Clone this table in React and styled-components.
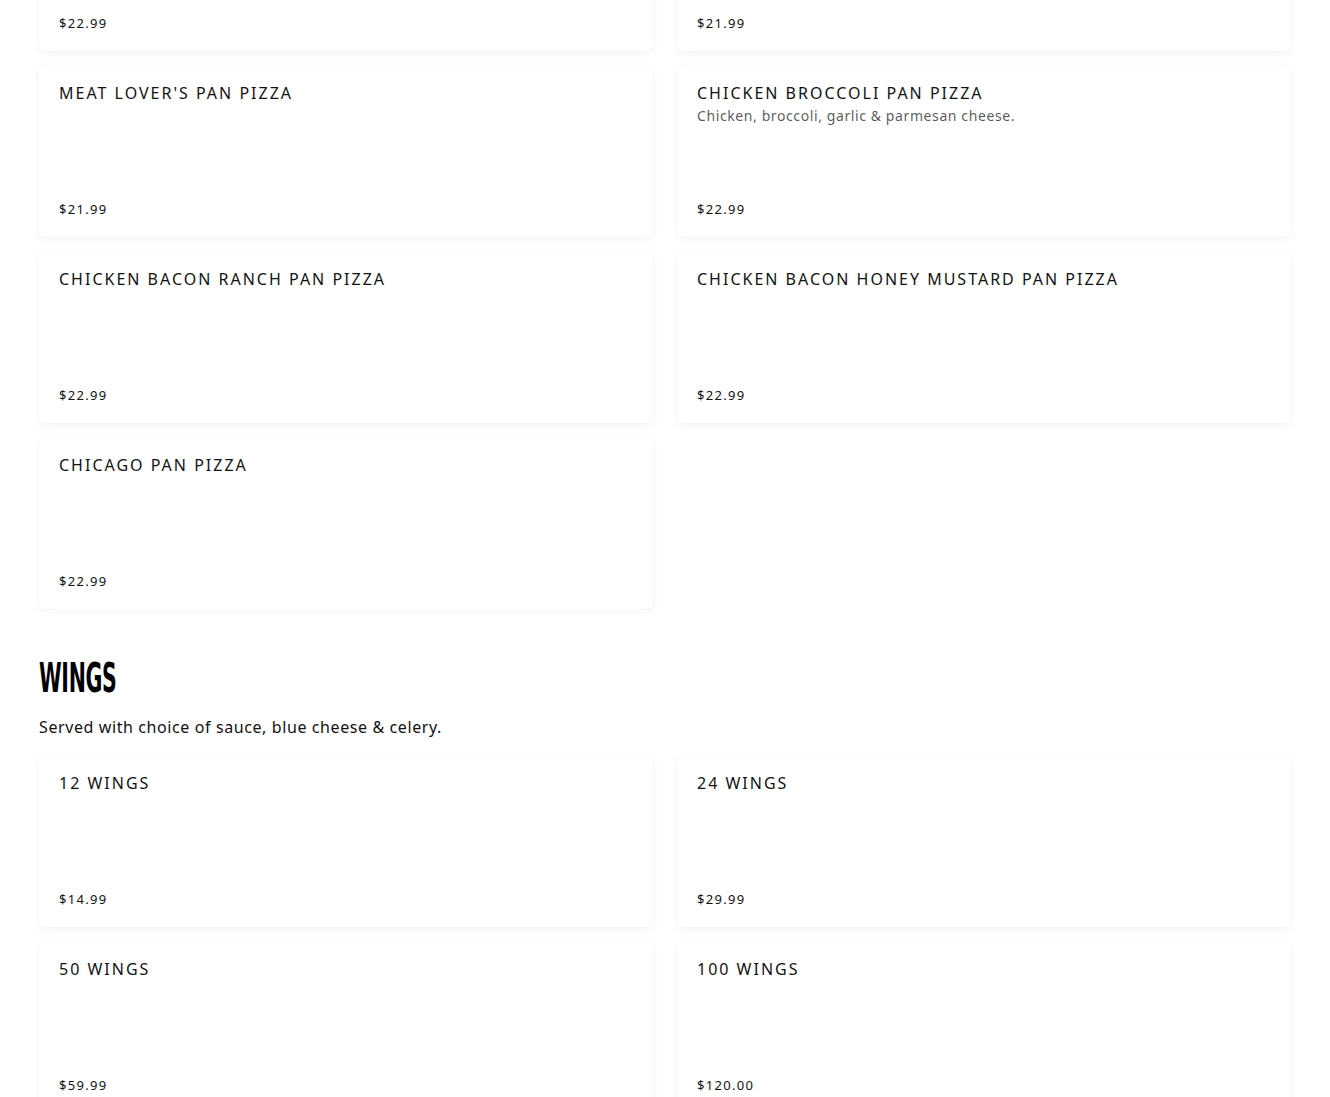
import styled, { createGlobalStyle } from "styled-components"

const pizzas = [
  { name: "Supreme Pan Pizza", price: "$22.99" },
  { name: "Veggie Pan Pizza", price: "$21.99" },
  { name: "Meat Lover's Pan Pizza", price: "$21.99" },
  {
    name: "Chicken Broccoli Pan Pizza",
    description: "Chicken, broccoli, garlic & parmesan cheese.",
    price: "$22.99",
  },
  { name: "Chicken Bacon Ranch Pan Pizza", price: "$22.99" },
  { name: "Chicken Bacon Honey Mustard Pan Pizza", price: "$22.99" },
  { name: "Chicago Pan Pizza", price: "$22.99" },
]

const wings = [
  { name: "12 Wings", price: "$14.99" },
  { name: "24 Wings", price: "$29.99" },
  { name: "50 Wings", price: "$59.99" },
  { name: "100 Wings", price: "$120.00" },
]

const MenuCard = ({ item }) => (
  <Card>
    <ItemName>{item.name}</ItemName>
    {item.description && <Description>{item.description}</Description>}
    <Price>{item.price}</Price>
  </Card>
)

const App = () => {
  return (
    <>
      <GlobalStyle />
      <Page>
        <Section>
          <Grid>
            {pizzas.map((item, i) => (
              <MenuCard item={item} key={i} />
            ))}
          </Grid>
        </Section>
        <Section>
          <Heading>
            <span>Wings</span>
          </Heading>
          <Subtitle>Served with choice of sauce, blue cheese &amp; celery.</Subtitle>
          <Grid>
            {wings.map((item, i) => (
              <MenuCard item={item} key={i} />
            ))}
          </Grid>
        </Section>
      </Page>
    </>
  )
}

const GlobalStyle = createGlobalStyle`
  html, body {
    margin: 0;
    padding: 0;
    background: #fff;
    overflow: hidden;
  }
  body {
    font-family: "Noto Sans", "DejaVu Sans", sans-serif;
    color: #121212;
  }
`

const Page = styled.main`
  width: 1252px;
  margin: -121px auto 0;
  padding-bottom: 40px;
`

const Section = styled.section`
  & + & {
    margin-top: 46px;
  }
`

const Grid = styled.div`
  display: grid;
  grid-template-columns: 1fr 1fr;
  column-gap: 24px;
  row-gap: 14px;
`

const Card = styled.article`
  display: flex;
  flex-direction: column;
  box-sizing: border-box;
  height: 172px;
  padding: 20px;
  background: #fff;
  border-radius: 6px;
  box-shadow: 0 3px 8px rgba(0, 0, 0, 0.045), 0 0 2px rgba(0, 0, 0, 0.03);
`

const ItemName = styled.h3`
  margin: 0;
  font-size: 16px;
  line-height: 16px;
  font-weight: 400;
  letter-spacing: 2px;
  text-transform: uppercase;
  color: #121212;
`

const Description = styled.p`
  margin: 4px 0 0;
  font-size: 14px;
  line-height: 22px;
  letter-spacing: 0.6px;
  color: rgba(18, 18, 18, 0.72);
`

const Price = styled.span`
  margin-top: auto;
  font-size: 13px;
  line-height: 16px;
  letter-spacing: 1.3px;
  color: #121212;
`

const Heading = styled.h2`
  margin: 0;
  height: 44px;
  font-family: "Liberation Sans Narrow", "DejaVu Sans Condensed", "Liberation Sans", sans-serif;
  font-size: 40px;
  line-height: 46px;
  font-weight: 700;
  text-transform: uppercase;
  color: #000;

  span {
    display: inline-block;
    transform: scaleX(0.57);
    transform-origin: left center;
    letter-spacing: -0.5px;
  }
`

const Subtitle = styled.p`
  margin: 18px 0 18px;
  font-size: 16px;
  line-height: 20px;
  letter-spacing: 0.6px;
  color: #121212;
`

export default App
